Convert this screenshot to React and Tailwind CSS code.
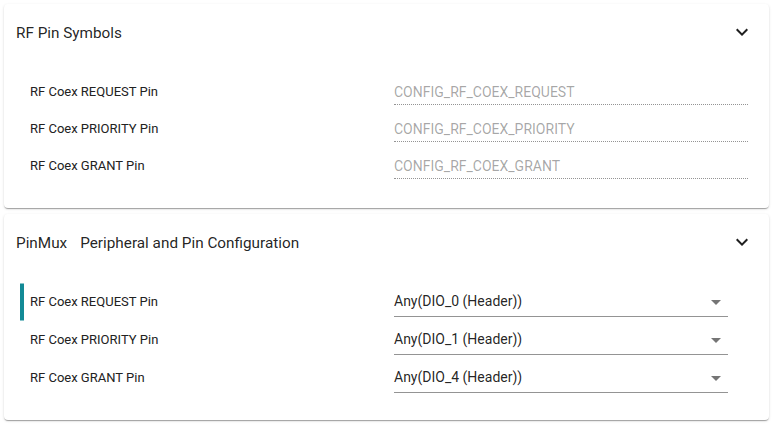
import React from "react";

const shadow =
  "shadow-[0px_2px_1px_-1px_rgba(0,0,0,0.2),0px_1px_1px_0px_rgba(0,0,0,0.14),0px_1px_3px_0px_rgba(0,0,0,0.12)]";

function ExpandMore() {
  return (
    <svg width="24" height="24" viewBox="0 0 24 24" className="fill-[#1f1f1f] mb-[3px]">
      <path d="M16.59 8.59 12 13.17 7.41 8.59 6 10l6 6 6-6z" />
    </svg>
  );
}

function ArrowDropDown() {
  return (
    <svg width="24" height="24" viewBox="0 0 24 24" className="fill-[rgba(0,0,0,0.54)]">
      <path d="M7 10l5 5 5-5z" />
    </svg>
  );
}

function Header({ children }) {
  return (
    <div className="h-[58px] flex items-center justify-between pl-[12px] pr-[15px]">
      <div className="text-[15.3px] text-[rgba(0,0,0,0.87)]">{children}</div>
      <ExpandMore />
    </div>
  );
}

const symbols = [
  ["RF Coex REQUEST Pin", "CONFIG_RF_COEX_REQUEST"],
  ["RF Coex PRIORITY Pin", "CONFIG_RF_COEX_PRIORITY"],
  ["RF Coex GRANT Pin", "CONFIG_RF_COEX_GRANT"],
];

const pins = [
  ["RF Coex REQUEST Pin", "Any(DIO_0 (Header))", true],
  ["RF Coex PRIORITY Pin", "Any(DIO_1 (Header))", false],
  ["RF Coex GRANT Pin", "Any(DIO_4 (Header))", false],
];

export default function App() {
  return (
    <div
      className="w-[774px] h-[424px] bg-white px-[4px] pt-[4px] flex flex-col gap-[6px]"
      style={{ fontFamily: "Roboto, 'Liberation Sans', sans-serif" }}
    >
      <div className={`w-[765px] h-[204px] bg-white rounded-[4px] ${shadow} flex flex-col`}>
        <Header>RF Pin Symbols</Header>
        <div className="pt-[17px] flex flex-col gap-[11px]">
          {symbols.map(([label, value]) => (
            <div key={label} className="flex items-center">
              <div className="w-[390px] pl-[26px] text-[13px] text-[#222222]">{label}</div>
              <div className="w-[354px] h-[26px] leading-[26px] text-[14px] text-[rgba(0,0,0,0.36)] border-b border-dotted border-[rgba(0,0,0,0.42)]">
                {value}
              </div>
            </div>
          ))}
        </div>
      </div>

      <div className={`w-[765px] h-[206px] bg-white rounded-[4px] ${shadow} flex flex-col`}>
        <Header>
          PinMux<span className="ml-[13px]">Peripheral and Pin Configuration</span>
        </Header>
        <div className="pt-[15px] flex flex-col gap-[8px]">
          {pins.map(([label, value, active]) => (
            <div key={label} className="relative flex items-center">
              {active && (
                <div className="absolute left-[16px] top-1/2 -translate-y-1/2 w-[4px] h-[37px] bg-[#128a96]" />
              )}
              <div className="w-[390px] pl-[26px] text-[13px] text-[#222222]">{label}</div>
              <div className="w-[334px] h-[30px] flex items-center justify-between border-b border-[rgba(0,0,0,0.42)]">
                <span className="text-[14px] text-[rgba(0,0,0,0.87)]">{value}</span>
                <ArrowDropDown />
              </div>
            </div>
          ))}
        </div>
      </div>
    </div>
  );
}
